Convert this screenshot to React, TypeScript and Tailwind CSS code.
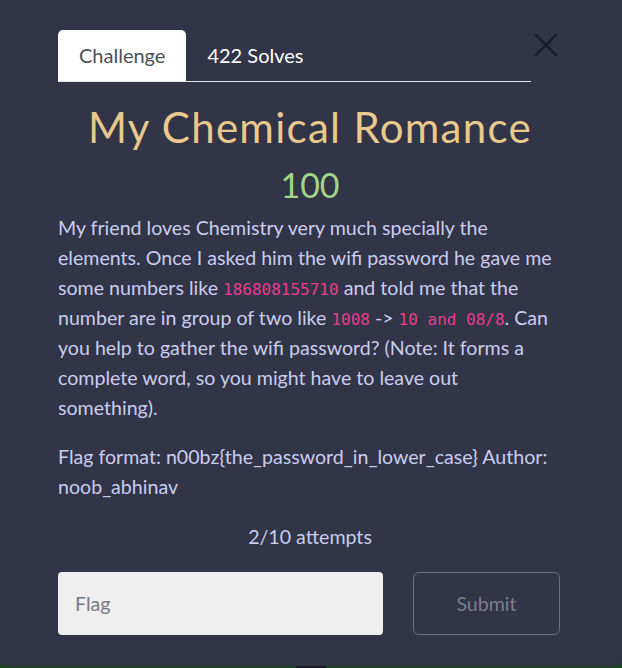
import { X } from 'lucide-react';

const code = "font-['DejaVu_Sans_Mono','Liberation_Mono',monospace] text-[16px] leading-none text-[#e83e8c]";

export default function App() {
  return (
    <div className="h-[668px] w-full bg-[#1a4620] font-['Lato','Liberation_Sans',sans-serif]">
      <div className="relative h-[666px] rounded-b-md bg-[#323447] pl-[58px] pr-[60px] pt-[30px]">
        <button className="absolute left-[526px] top-[25px] text-[#1c1e2c]" aria-label="Close">
          <X size={40} strokeWidth={1.5} />
        </button>

        <div className="flex w-[473px] border-b border-[#e3e4ea]">
          <div className="rounded-t-[5px] bg-white px-[21px] py-[13px] text-[20px] leading-[25px] text-[#495057]">
            Challenge
          </div>
          <div className="px-[21px] py-[13px] text-[20px] leading-[25px] text-white">422 Solves</div>
        </div>

        <h1 className="mt-[20px] text-center text-[42px] leading-[50px] tracking-[1.3px] text-[#e9c98c]">
          My Chemical Romance
        </h1>
        <div className="mt-[13px] text-center text-[34px] leading-[40px] text-[#a0d487]">100</div>

        <p className="mt-[8px] text-[19.6px] leading-[30px] text-[#c9cdef]">
          My friend loves Chemistry very much specially the elements. Once I asked him the wifi password he gave me
          some numbers like <code className={code}>186808155710</code> and told me that the number are in group of
          two like <code className={code}>1008</code> -&gt; <code className={code}>10 and 08/8</code>. Can you help
          to gather the wifi password? (Note: It forms a complete word, so you might have to leave out something).
        </p>
        <p className="mt-[19px] text-[19.6px] leading-[30px] text-[#c9cdef]">
          Flag format: n00bz&#123;the_password_in_lower_case&#125; Author: noob_abhinav
        </p>

        <div className="mt-[20px] text-center text-[19.6px] leading-[30px] text-[#c9cdef]">2/10 attempts</div>

        <div className="mt-[20px] flex gap-[30px]">
          <input
            placeholder="Flag"
            className="h-[63px] w-[325px] rounded-[4px] bg-[#efefef] px-[17px] text-[19.6px] text-[#495057] outline-none placeholder:text-[#767b82]"
          />
          <button className="h-[63px] w-[147px] rounded-[6px] border border-[#6c6f7f] text-[19.6px] text-[#7b7e8a]">
            Submit
          </button>
        </div>
      </div>
      <div className="mx-auto h-[2px] w-[30px] bg-[#1c1d27]" />
    </div>
  );
}
